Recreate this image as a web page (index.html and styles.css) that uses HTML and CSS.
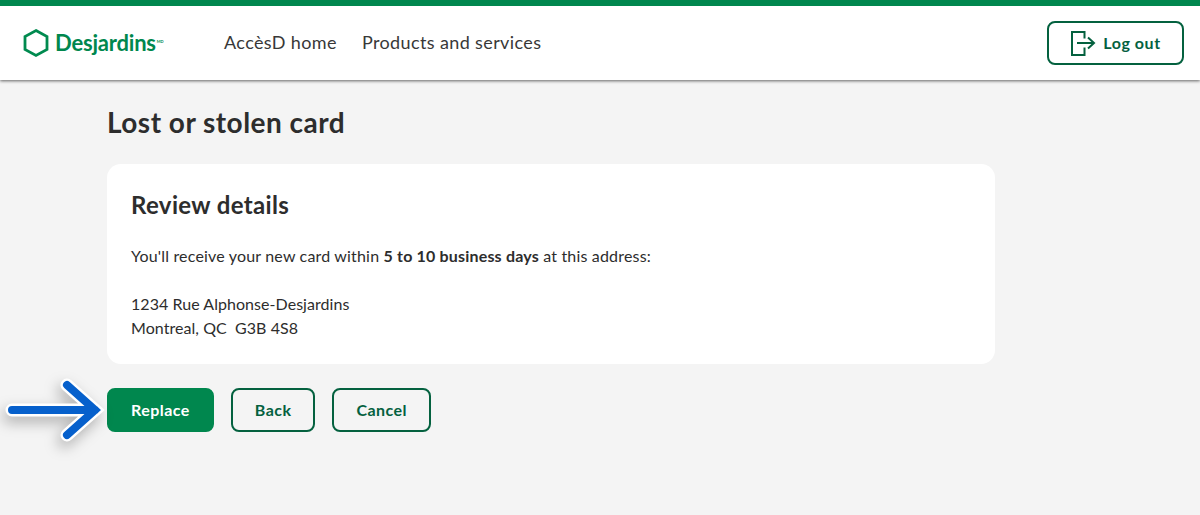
FILE: index.html
```html
<!DOCTYPE html>
<html lang="en">
<head>
<meta charset="utf-8">
<title>Lost or stolen card</title>
<link rel="stylesheet" href="styles.css">
</head>
<body>
<header class="header">
  <a class="logo" href="#">
    <svg class="logo-mark" width="26" height="28" viewBox="0 0 26 28" aria-hidden="true"><path d="M13 1.6 L24 7.6 L24 20.4 L13 26.4 L2 20.4 L2 7.6 Z" fill="none" stroke="#008a4f" stroke-width="2.8" stroke-linejoin="miter"/></svg>
    <span class="logo-text">Desjardins</span><span class="logo-md">MD</span>
  </a>
  <nav class="nav">
    <a href="#">AccèsD home</a>
    <a href="#">Products and services</a>
  </nav>
  <button class="btn btn-logout">
    <svg width="26" height="26" viewBox="0 0 26 26" aria-hidden="true"><path d="M14.5 8.5 V2 H2 V25 H14.5 V17.5" fill="none" stroke="#04613f" stroke-width="2"/><path d="M7 13 H23 M18 7.5 L24 13 L18 18.5" fill="none" stroke="#04613f" stroke-width="2"/></svg>
    <span>Log out</span>
  </button>
</header>
<main class="main">
  <h1 class="title">Lost or stolen card</h1>
  <section class="card">
    <h2 class="card-title">Review details</h2>
    <p class="line">You'll receive your new card within <strong>5 to 10 business days</strong> at this address:</p>
    <p class="address">1234 Rue Alphonse-Desjardins<br>Montreal, QC&nbsp; G3B 4S8</p>
  </section>
  <div class="actions">
    <button class="btn btn-primary">Replace</button>
    <button class="btn">Back</button>
    <button class="btn">Cancel</button>
    <svg class="arrow" width="100" height="70" viewBox="0 0 100 70" aria-hidden="true">
      <path class="arrow-halo" d="M8 35 H91 M63 10 L91 35 L63 60"/>
      <path class="arrow-core" d="M8 35 H91 M63 10 L91 35 L63 60"/>
    </svg>
  </div>
</main>
</body>
</html>
```
FILE: styles.css
```css
* { box-sizing: border-box; }
html, body { margin: 0; height: 100%; }
body {
  background: #f4f4f4;
  color: #2d2d2d;
  font-family: "Lato", "Liberation Sans", sans-serif;
  overflow: hidden;
}
.header {
  height: 80px;
  background: #fff;
  border-top: 6px solid #00874e;
  box-shadow: 0 1px 3px rgba(0, 0, 0, .6);
  display: flex;
  align-items: center;
  padding: 0 16px 0 23px;
}
.logo {
  display: flex;
  align-items: center;
  text-decoration: none;
  width: 201px;
}
.logo-mark { margin-right: 6px; }
.logo-text {
  color: #00874e;
  font-weight: 700;
  font-size: 22px;
  letter-spacing: -.2px;
  line-height: 26px;
}
.logo-md {
  color: #00874e;
  font-size: 4px;
  font-weight: 700;
  margin: -4px 0 0 1px;
}
.nav { display: flex; gap: 25px; flex: 1; margin-top: -2px; }
.nav a {
  color: #383838;
  font-size: 18px;
  letter-spacing: .38px;
  text-decoration: none;
}
.btn {
  height: 44px;
  padding: 0 22px 2px;
  border: 2px solid #04613f;
  border-radius: 8px;
  background: transparent;
  color: #04613f;
  font-family: inherit;
  font-size: 16px;
  font-weight: 700;
  letter-spacing: .46px;
}
.btn-logout {
  width: 137px;
  display: flex;
  align-items: center;
  justify-content: center;
  gap: 7px;
  padding: 0 0 1px;
  letter-spacing: .55px;
}
.btn-primary {
  background: #00874e;
  border-color: #00874e;
  color: #fff;
}
.main { padding: 0 0 0 107px; width: 995px; }
.title {
  margin: 0;
  padding-top: 25px;
  font-size: 28px;
  line-height: 34px;
  font-weight: 700;
  letter-spacing: .48px;
}
.card {
  margin-top: 25px;
  height: 200px;
  background: #fff;
  border-radius: 14px;
  padding: 26px 24px;
}
.card-title {
  margin: 0;
  font-size: 24px;
  line-height: 30px;
  font-weight: 700;
  letter-spacing: .36px;
}
.line, .address {
  margin: 0;
  font-size: 16px;
  line-height: 24px;
}
.line { margin-top: 24px; letter-spacing: .18px; }
.address { margin-top: 24px; letter-spacing: .05px; }
.actions {
  position: relative;
  display: flex;
  gap: 17px;
  margin-top: 24px;
}
.arrow {
  position: absolute;
  left: -103px;
  top: -13px;
  overflow: visible;
  filter: drop-shadow(-3px 6px 7px rgba(0, 0, 0, .28));
}
.arrow path { fill: none; stroke-linecap: round; stroke-linejoin: miter; }
.arrow-halo { stroke: #fff; stroke-width: 13px; }
.arrow-core { stroke: #0660cc; stroke-width: 8px; }
```
